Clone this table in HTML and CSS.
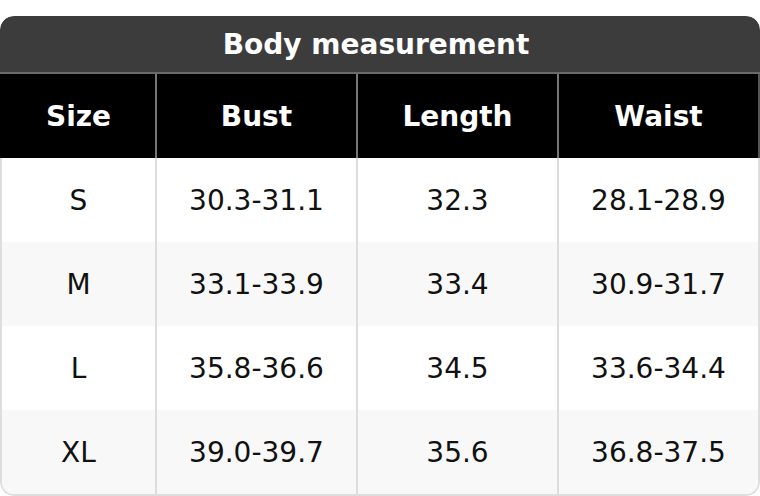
FILE: index.html
```html
<!DOCTYPE html>
<html>
<head>
<meta charset="utf-8">
<link rel="stylesheet" href="styles.css">
</head>
<body>
<div class="chart">
  <div class="title">Body measurement</div>
  <div class="row head">
    <div class="cell">Size</div>
    <div class="cell">Bust</div>
    <div class="cell">Length</div>
    <div class="cell">Waist</div>
  </div>
  <div class="body">
    <div class="row">
      <div class="cell">S</div>
      <div class="cell">30.3-31.1</div>
      <div class="cell">32.3</div>
      <div class="cell">28.1-28.9</div>
    </div>
    <div class="row alt">
      <div class="cell">M</div>
      <div class="cell">33.1-33.9</div>
      <div class="cell">33.4</div>
      <div class="cell">30.9-31.7</div>
    </div>
    <div class="row">
      <div class="cell">L</div>
      <div class="cell">35.8-36.6</div>
      <div class="cell">34.5</div>
      <div class="cell">33.6-34.4</div>
    </div>
    <div class="row alt">
      <div class="cell">XL</div>
      <div class="cell">39.0-39.7</div>
      <div class="cell">35.6</div>
      <div class="cell">36.8-37.5</div>
    </div>
  </div>
</div>
</body>
</html>
```

FILE: styles.css
```css
html, body {
  margin: 0;
  padding: 0;
  background: #ffffff;
}
body {
  font-family: "DejaVu Sans", Verdana, sans-serif;
  padding-top: 16px;
}
.chart {
  width: 760px;
  border-radius: 14px;
  overflow: hidden;
}
.title {
  height: 56px;
  background: #3c3c3c;
  color: #ffffff;
  font-weight: bold;
  font-size: 28px;
  display: flex;
  align-items: center;
  justify-content: center;
  padding-right: 8px;
  border-bottom: 2px solid #6a6a6a;
  border-radius: 14px 14px 0 0;
}
.row {
  display: grid;
  grid-template-columns: 153px 1fr 1fr 1fr;
  height: 84px;
}
.cell {
  display: flex;
  align-items: center;
  justify-content: center;
  font-size: 28px;
  color: #111111;
}
.row .cell + .cell {
  border-left: 2px solid #dddddd;
}
.head {
  background: #000000;
  border-left: 2px solid #000000;
  border-right: 2px solid #555555;
}
.head .cell {
  color: #ffffff;
  font-weight: bold;
}
.head .cell + .cell {
  border-left-color: #777777;
}
.body {
  border: 2px solid #dddddd;
  border-top: none;
  border-radius: 0 0 14px 14px;
  overflow: hidden;
}
.alt {
  background: #f8f8f8;
}
```
